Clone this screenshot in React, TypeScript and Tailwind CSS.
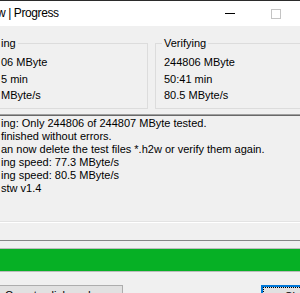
import React from "react";

function GroupBox({ label, lines, className }: { label: string; lines: string[]; className?: string }) {
  return (
    <fieldset className={"w-[156px] shrink-0 border border-[#dcdcdc] pl-[6px] pt-[4px] pb-[4px] " + (className ?? "")}>
      <legend className="px-[2px] leading-[13px] whitespace-nowrap">{label}</legend>
      <div className="pl-[2px] leading-[16.67px] whitespace-nowrap">
        {lines.map((l) => (
          <div key={l}>{l}</div>
        ))}
      </div>
    </fieldset>
  );
}

export default function App() {
  const log = [
    "ing: Only 244806 of 244807 MByte tested.",
    "finished without errors.",
    "an now delete the test files *.h2w or verify them again.",
    "ing speed: 77.3 MByte/s",
    "ing speed: 80.5 MByte/s",
    "stw v1.4",
  ];
  return (
    <div className="w-[300px] h-[293px] overflow-hidden bg-[#f0f0f0] text-black font-['Liberation_Sans',Arial,sans-serif] text-[11px] leading-[13px]">
      <div className="w-[345px]">
        {/* Title bar */}
        <div className="h-[26px] border-t border-[#2b2b2b] bg-white flex items-center">
          <span className="-ml-[3px] text-[12px] tracking-[-0.4px] whitespace-nowrap">w | Progress</span>
          <div className="ml-auto flex h-full">
            <div className="w-[46px] h-full flex items-center justify-center">
              <div className="w-[10px] h-px bg-black" />
            </div>
            <div className="w-[46px] h-full flex items-center justify-center">
              <div className="w-[10px] h-[10px] border border-[#c4c4c4]" />
            </div>
            <div className="w-[46px] h-full" />
          </div>
        </div>

        {/* Group boxes */}
        <div className="flex gap-[7px] pt-[11px]">
          <GroupBox className="-ml-[8px]" label="ing" lines={["06 MByte", "5 min", "MByte/s"]} />
          <GroupBox label="Verifying" lines={["244806 MByte", "50:41 min", "80.5 MByte/s"]} />
        </div>

        {/* Log */}
        <div className="mt-[5px] -mx-[10px] h-[109px] border-t border-b border-t-[#a0a0a0] border-b-white">
          <div className="h-full border-t border-b border-t-[#696969] border-b-[#e3e3e3] pt-px pl-[11px] whitespace-nowrap">
            {log.map((l) => (
              <div key={l}>{l}</div>
            ))}
          </div>
        </div>

        {/* Separator */}
        <div className="mt-[17px] -mx-[10px] h-px bg-[#868686]" />

        {/* Progress bar */}
        <div className="mt-[7px] -mx-[10px] h-[24px] border border-[#bcbcbc] bg-[#06b025]" />

        {/* Buttons */}
        <div className="mt-[13px] flex">
          <div className="-ml-[20px] w-[143px] h-[23px] shrink-0 border border-[#adadad] bg-[#e1e1e1] pl-[24px] pb-[2px] flex items-center whitespace-nowrap">
            Copy to clipboard
          </div>
          <div className="ml-[138px] w-[75px] h-[23px] shrink-0 border-2 border-[#0078d7] bg-[#e1e1e1]">
            <div className="h-full border border-dotted border-black flex items-center justify-center pb-[1px]">
              Close
            </div>
          </div>
        </div>
      </div>
    </div>
  );
}
